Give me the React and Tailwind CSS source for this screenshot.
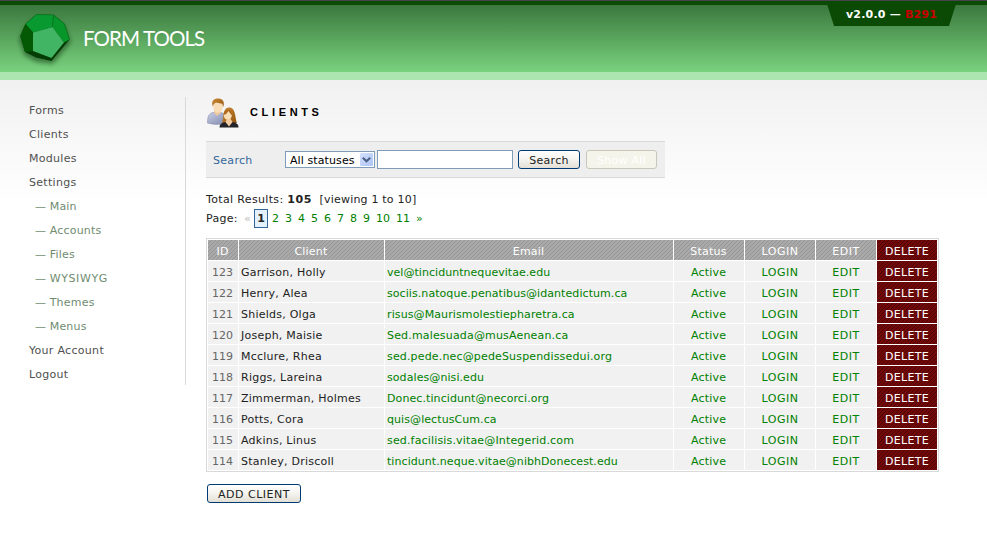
const clients = [
  [123, 'Garrison, Holly', 'vel@tinciduntnequevitae.edu', 'tracking-[0.04px]'],
  [122, 'Henry, Alea', 'sociis.natoque.penatibus@idantedictum.ca', 'tracking-[0.07px]'],
  [121, 'Shields, Olga', 'risus@Maurismolestiepharetra.ca', 'tracking-[0.11px]'],
  [120, 'Joseph, Maisie', 'Sed.malesuada@musAenean.ca', 'tracking-[0.17px]'],
  [119, 'Mcclure, Rhea', 'sed.pede.nec@pedeSuspendissedui.org', 'tracking-[0.16px]'],
  [118, 'Riggs, Lareina', 'sodales@nisi.edu', 'tracking-[0.08px]'],
  [117, 'Zimmerman, Holmes', 'Donec.tincidunt@necorci.org', 'tracking-[0.09px]'],
  [116, 'Potts, Cora', 'quis@lectusCum.ca', 'tracking-[0.08px]'],
  [115, 'Adkins, Linus', 'sed.facilisis.vitae@Integerid.com', 'tracking-[0.16px]'],
  [114, 'Stanley, Driscoll', 'tincidunt.neque.vitae@nibhDonecest.edu', 'tracking-[0.06px]'],
];

const nav = [
  ['Forms'], ['Clients'], ['Modules'], ['Settings'],
  ['Main', true], ['Accounts', true], ['Files', true], ['WYSIWYG', true], ['Themes', true], ['Menus', true],
  ['Your Account'], ['Logout'],
];

const gray = 'bg-[linear-gradient(135deg,#a9a9a9_44%,#969696_44%_56%,#a9a9a9_56%)] bg-size-[4px_4px] text-white';
const red = 'bg-[linear-gradient(135deg,#720909_44%,#4d0505_44%_56%,#720909_56%)] bg-size-[4px_4px] text-white tracking-[0.3px]';
const xpButton = 'rounded-[3px] border border-[#003c74] bg-linear-to-b from-white via-[#f4f3ee] to-[#e3dfd5] text-[#222]';

function Logo() {
  return (
    <svg className="ml-[14px] mt-[8px] h-[64px] w-[64px] shrink-0" viewBox="14 8 64 64">
      <defs>
        <filter id="shadow" x="-20%" y="-20%" width="140%" height="150%">
          <feGaussianBlur stdDeviation="2" />
        </filter>
      </defs>
      <path d="M25 26 37 17 53 17 65 26 71 42 53 64 36 62 24 55 19 39Z" fill="#123f16" opacity=".55" filter="url(#shadow)" />
      <path d="M25.5 24 36.5 14.5 53.5 15 64.5 24 69.5 39.5 51.5 61 36 57.5 25 52 20.3 36Z" fill="#043d04" />
      <path d="M25.5 24 36.5 14.5 53.5 15 52.5 27 33 32.5Z" fill="#089a30" />
      <path d="M53.5 15 64.5 24 69.5 39.5 64 42.5 52.5 27Z" fill="#06962a" />
      <path d="M25.5 24 33 32.5 33 51 25 52 20.3 36Z" fill="#045a04" />
      <path d="M33 32.5 52.5 27 64 42.5 51.5 58 33 51Z" fill="#42b564" />
      <path d="M25.5 24 36.5 14.5 53.5 15 64.5 24 69.5 39.5M53.5 15 52.5 27" fill="none" stroke="#087321" strokeWidth=".7" />
    </svg>
  );
}

function ClientsIcon() {
  return (
    <svg className="mt-px h-[32px] w-[32px] shrink-0" viewBox="0 0 32 32">
      <defs>
        <linearGradient id="shirt" x1="0" y1="0" x2="1" y2="1">
          <stop offset="0" stopColor="#c9cee3" />
          <stop offset="1" stopColor="#8089b0" />
        </linearGradient>
        <linearGradient id="hair" x1="0" y1="0" x2="1" y2="1">
          <stop offset="0" stopColor="#cb8b35" />
          <stop offset="1" stopColor="#925510" />
        </linearGradient>
      </defs>
      <path d="M.5 25C.5 18 2 15.5 6 14.5H14C18 15.5 19 18 19 25Q9 28 .5 25Z" fill="url(#shirt)" stroke="#8990ad" strokeWidth=".6" />
      <path d="M7 14.5 10 18 14 14.5V12H7Z" fill="#f0c89c" />
      <ellipse cx="11" cy="8.5" rx="4.8" ry="6.3" fill="#f8ddb8" />
      <path d="M5.8 8.5C3.8 3 7 .4 11.5.6 16 .7 18 4.5 16.2 9L15.2 5.8 9 4.5 6.8 6Z" fill="url(#hair)" />
      <path d="M15 25C17 22 15 9.5 22 9.5 29 9.5 28 20 30 25Z" fill="url(#hair)" />
      <ellipse cx="20.8" cy="17" rx="4" ry="5" fill="#f9ddb6" />
      <path d="M16.7 17C16.7 12 20 11 24 12.5L26 18Q23 16 21.5 13Q20 16 16.7 17Z" fill="#ad681c" />
      <path d="M12.5 29.5C12.5 26 15 24.5 19 24H25C29 24.5 31.5 26 31.5 29.5Z" fill="#24242a" />
      <path d="M18.5 24 22 28.5 25.5 24 23.5 21H20Z" fill="#f3cda0" />
    </svg>
  );
}

export default function App() {
  return (
    <div className="h-[557px] w-[987px] overflow-hidden bg-white font-['DejaVu_Sans','Liberation_Sans',sans-serif] text-[11px] leading-[14px] tracking-[0.2px] text-[#222]">
      <header className="flex h-[80px] items-start border-b-8 border-[#ace5af] bg-[linear-gradient(#45444a_0_1px,#0b4a04_1px_5px,#3b783e_5px,#79d27e_72px)]">
        <Logo />
        <div className="ml-[5px] mt-[23px] whitespace-nowrap font-['Lato'] text-[20.5px] leading-[30px] tracking-[-0.9px] text-white">FORM TOOLS</div>
        <div className="ml-auto mr-[31px] mt-[4px] flex h-[22px] w-[129px] items-center justify-center bg-[#0b4a04] font-bold tracking-[0.2px] text-white [clip-path:polygon(0_0,100%_0,122px_100%,7px_100%)]">
          <span className="whitespace-pre pb-px">v2.0.0 — <span className="text-[#c80000]">B291</span></span>
        </div>
      </header>
      <div className="flex h-[477px] items-start bg-[linear-gradient(#f1f1f1,#ffffff_125px)] pt-[17px]">
        <nav className="h-[288px] w-[186px] shrink-0 border-r border-[#d9d9d9] pl-[29px] pt-[2px]">
          {nav.map(([label, sub]) => (
            <div key={label} className={sub ? 'h-6 whitespace-pre pl-[6px] leading-6 text-[#6f8c6f]' : 'h-6 leading-6 tracking-[0.3px] text-[#505050]'}>
              {sub ? <span className="mr-[3.5px]">—</span> : null}
              <span className={label === 'WYSIWYG' ? 'tracking-[0.6px]' : ''}>{label}</span>
            </div>
          ))}
        </nav>
        <main className="ml-[20px] w-[733px]">
          <div className="flex h-[44px] items-start pl-px">
            <ClientsIcon />
            <h1 className="ml-[11px] mt-[8px] text-[11px] font-bold leading-[14px] tracking-[3.65px] text-black font-['Liberation_Sans',sans-serif]">CLIENTS</h1>
          </div>
          <div className="flex h-[37px] w-[459px] items-center border-y border-[#d9d9d9] bg-[#eeeeee] pl-[7px]">
            <span className="w-[72px] pt-[2px] tracking-[0.3px] text-[#336699]">Search</span>
            <div className="flex h-[17px] w-[90px] items-center justify-between border border-[#7f9db9] bg-white pl-[4px] pr-px text-black">
              <span className="whitespace-nowrap pt-[2px] tracking-[0.1px]">All statuses</span>
              <span className="flex h-[13px] w-[13px] items-center justify-center rounded-[1px] bg-linear-to-br from-[#d5e1fd] to-[#adc4f5]">
                <svg className="h-[6px] w-[9px]" viewBox="0 0 9 6"><path d="M.8.8 4.5 4.3 8.2.8" fill="none" stroke="#4d6185" strokeWidth="2.2" /></svg>
              </span>
            </div>
            <input className="ml-[2px] h-[19px] w-[136px] border border-[#7f9db9] bg-white" />
            <button className={`ml-[5px] h-[19px] w-[62px] pt-[2px] leading-[15px] tracking-[0.3px] ${xpButton}`}>Search</button>
            <button className="ml-[6px] h-[19px] w-[71px] rounded-[3px] border border-[#c9c7ba] bg-[#f5f4ea] pt-[2px] leading-[15px] tracking-[0.3px] text-white">Show All</button>
          </div>
          <div className="mt-[15px] whitespace-pre"><span className="tracking-[0.35px]">Total Results: </span><b className="tracking-[0.6px]">105</b>  [viewing 1 to 10]</div>
          <div className="mt-px flex h-[20px] items-center whitespace-pre tracking-[-0.02px] text-[#008000]">
            <span className="w-[38px] pt-[2px] tracking-[0.3px] text-[#222]">Page:</span>
            <span className="w-[10px] pt-[2px] text-[#bbb]">«</span>
            <span className="mr-[4px] flex h-[19px] w-[14px] items-center justify-center border border-[#336699] bg-[#e4f0fb] pt-[2px] font-bold text-[#222]">1</span>
            {[2, 3, 4, 5, 6, 7, 8, 9].map((n) => <span key={n} className="w-[13px] pt-[2px]">{n}</span>)}
            <span className="w-[20px] pt-[2px]">10</span><span className="w-[20px] pt-[2px]">11</span><span className="pt-[2px]">»</span>
          </div>
          <div className="mt-[10px] grid h-[234px] w-[733px] auto-rows-[20px] grid-cols-[30px_145px_288px_70px_70px_60px_60px] gap-px border border-[#d9d9d9] bg-white p-px text-center leading-[24px] text-[#008000] [&>div]:h-[20px] [&>div]:whitespace-nowrap">
            {['ID', 'Client', 'Email', 'Status', 'LOGIN', 'EDIT'].map((h) => <div key={h} className={`${gray} ${h === 'LOGIN' || h === 'EDIT' ? 'tracking-[0.5px]' : 'pr-px'}`}>{h}</div>)}
            <div className={red}>DELETE</div>
            {clients.map(([id, name, email, spacing]) => [
              <div key={`${id}i`} className="bg-[#f1f1f1] pr-px tracking-[0.05px] text-[#666]">{id}</div>,
              <div key={`${id}n`} className="bg-[#f1f1f1] pl-[2px] text-left tracking-[0.24px] text-[#222]">{name}</div>,
              <div key={`${id}e`} className={`bg-[#f1f1f1] pl-[2px] text-left ${spacing}`}>{email}</div>,
              <div key={`${id}s`} className="bg-[#f1f1f1] pr-px">Active</div>,
              <div key={`${id}l`} className="bg-[#f1f1f1] tracking-[0.5px]">LOGIN</div>,
              <div key={`${id}t`} className="bg-[#f1f1f1] tracking-[0.5px]">EDIT</div>,
              <div key={`${id}d`} className={red}>DELETE</div>,
            ])}
          </div>
          <button className={`ml-px mt-[12px] h-[19px] w-[94px] pt-[2px] leading-[15px] tracking-[0.5px] ${xpButton}`}>ADD CLIENT</button>
        </main>
      </div>
    </div>
  );
}
